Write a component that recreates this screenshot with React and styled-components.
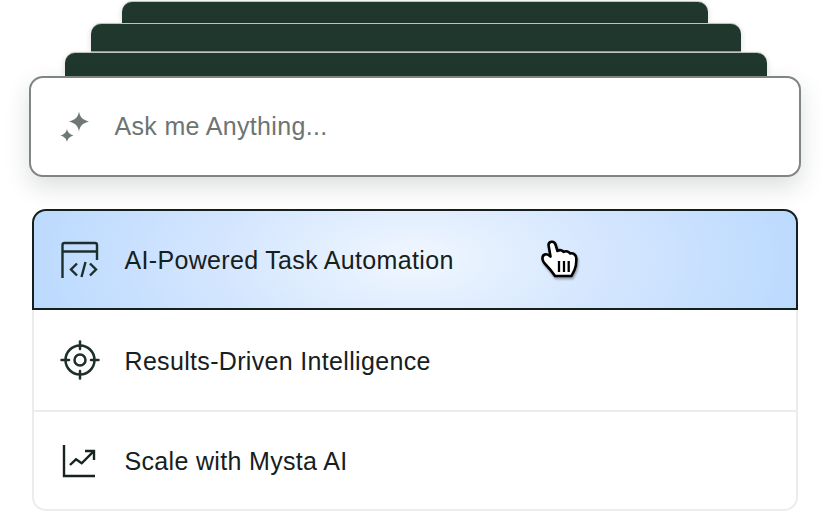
import styled, { createGlobalStyle } from "styled-components";

const GlobalStyle = createGlobalStyle`
  html, body {
    margin: 0;
    padding: 0;
    background: #ffffff;
  }

  body {
    width: 828px;
    height: 511px;
    overflow: hidden;
    font-family: "Liberation Sans", Arial, sans-serif;
  }
`;

const TABS = [
  { width: 586, height: 21, gap: 1, shift: 0 },
  { width: 650, height: 27, gap: 2, shift: 2 },
  { width: 702, height: 23, gap: 0, shift: 2 },
];

const ITEMS = [
  { label: "AI-Powered Task Automation", icon: "code", active: true },
  { label: "Results-Driven Intelligence", icon: "target" },
  { label: "Scale with Mysta AI", icon: "chart" },
];

function SparkIcon() {
  return (
    <svg width="32" height="32" viewBox="0 0 32 32" fill="#6d7877">
      <path d="M19 0.5 C20 6 22 8.5 29 10.5 C22 12.5 20 15 19 20.5 C18 15 16 12.5 9 10.5 C16 8.5 18 6 19 0.5 Z" />
      <path d="M7 18 C7.8 21.5 9.5 23.2 13.5 24.5 C9.5 25.8 7.8 27.5 7 31 C6.2 27.5 4.5 25.8 0.5 24.5 C4.5 23.2 6.2 21.5 7 18 Z" />
    </svg>
  );
}

function CodeIcon() {
  return (
    <svg width="38" height="38" viewBox="0 0 38 38" fill="none" stroke="#1c2f2a" strokeWidth="2.4">
      <path d="M1.5 37 V4 C1.5 2.8 2.3 2 3.5 2 H34 C35.2 2 36 2.8 36 4 V19" />
      <path d="M1.5 10.5 H36" />
      <path d="M16 22.5 L10 28.5 L16 34.5" />
      <path d="M29 22.5 L35 28.5 L29 34.5" />
      <path d="M24.5 21 L20.5 36" />
    </svg>
  );
}

function TargetIcon() {
  return (
    <svg width="40" height="40" viewBox="0 0 40 40" fill="none" stroke="#1c2f2a" strokeWidth="2.5" strokeLinecap="round">
      <circle cx="20" cy="20" r="14.5" />
      <circle cx="20" cy="20" r="5.5" />
      <path d="M20 1.5 V9" />
      <path d="M20 31 V38.5" />
      <path d="M1.5 20 H9" />
      <path d="M31 20 H38.5" />
    </svg>
  );
}

function ChartIcon() {
  return (
    <svg width="36" height="34" viewBox="0 0 36 34" fill="none" stroke="#16231f" strokeWidth="2.4">
      <path d="M2 1 V32 H33" />
      <path d="M8 21 L14 15.3 L19.7 19.3 L31.3 7.7" />
      <path d="M23 7 H32 V16" />
    </svg>
  );
}

function HandCursor() {
  return (
    <svg width="37" height="38" viewBox="0 0 37 38">
      <path
        d="M7.5 5 C7.5 1.5 13 0 14.5 4.5 L16.5 11 C18.5 9.5 21.5 10 22.5 12 C25 10.5 28 11.5 29 13.5 C32 12.5 35 14.5 35.3 18 C35.5 23 35 27 33.5 30 L30.5 36 L14 36 C12 33 9 29 5.5 25.5 C3.5 23.5 1 21 1.5 17.5 C2 14 6 13 9.5 16.5 Z"
        fill="#ffffff"
        stroke="#000000"
        strokeWidth="2.6"
        strokeLinejoin="round"
      />
      <path d="M18 21 V32 M23 21 V32 M27.7 21 V32" stroke="#000000" strokeWidth="2.3" />
    </svg>
  );
}

const ICONS = {
  code: <CodeIcon />,
  target: <TargetIcon />,
  chart: <ChartIcon />,
};

function App() {
  return (
    <>
      <GlobalStyle />
      <Page>
        <TabStack>
          {TABS.map((tab) => (
            <Tab
              key={tab.width}
              $width={tab.width}
              $height={tab.height}
              $gap={tab.gap}
              $shift={tab.shift}
            />
          ))}
        </TabStack>
        <SearchBox>
          <SparkIcon />
          <Placeholder>Ask me Anything...</Placeholder>
        </SearchBox>
        <FeatureList>
          {ITEMS.map((item) => (
            <FeatureRow key={item.label} $active={item.active}>
              <IconSlot>{ICONS[item.icon]}</IconSlot>
              <FeatureLabel>{item.label}</FeatureLabel>
              {item.active && (
                <Cursor>
                  <HandCursor />
                </Cursor>
              )}
            </FeatureRow>
          ))}
        </FeatureList>
      </Page>
    </>
  );
}

const Page = styled.div`
  display: flex;
  flex-direction: column;
  align-items: center;
  width: 829px;
  padding-top: 2px;
`;

const TabStack = styled.div`
  display: flex;
  flex-direction: column;
  align-items: center;
  width: 100%;
`;

const Tab = styled.div`
  box-sizing: border-box;
  width: ${(props) => props.$width}px;
  height: ${(props) => props.$height}px;
  margin-bottom: ${(props) => props.$gap}px;
  margin-left: ${(props) => props.$shift}px;
  background: #1f372d;
  border-radius: 10px 10px 0 0;
  box-shadow: 0 -1px 0 #bfc4c2, 0 1px 0 #9aa19e, 2px 0 4px rgba(0, 0, 0, 0.08), -2px 0 4px rgba(0, 0, 0, 0.08);
`;

const SearchBox = styled.div`
  box-sizing: border-box;
  position: relative;
  display: flex;
  align-items: center;
  gap: 23px;
  width: 772px;
  height: 101px;
  margin-bottom: 32px;
  padding: 0 0 0 29px;
  background: #ffffff;
  border: 2px solid #7f8583;
  border-radius: 14px;
  box-shadow: 0 10px 24px rgba(40, 50, 48, 0.16);
`;

const Placeholder = styled.span`
  color: #6d7472;
  font-size: 25px;
  letter-spacing: 0.33px;
`;

const FeatureList = styled.div`
  box-sizing: border-box;
  width: 766px;
  height: 302px;
  display: flex;
  flex-direction: column;
  background: #ffffff;
  border: 2px solid #ececec;
  border-top: 0;
  border-radius: 14px;
`;

const FeatureRow = styled.div`
  box-sizing: border-box;
  position: relative;
  display: flex;
  align-items: center;
  flex: 0 0 100px;
  gap: 25px;
  padding-left: 26px;
  ${(props) =>
    props.$active
      ? `
    flex-basis: 101px;
    margin: 0 -2px;
    background: radial-gradient(ellipse 400px 190px at 50% 50%, #f0f7ff 0%, #d6e7fe 45%, #bad9fe 100%);
    border: 2px solid #15201d;
    border-radius: 14px 14px 0 0;
  `
      : `
    &:last-child { flex: 1; border-top: 2px solid #ececec; }
  `}
`;

const IconSlot = styled.div`
  display: flex;
  align-items: center;
  justify-content: center;
  width: 40px;
`;

const FeatureLabel = styled.span`
  padding-top: 2px;
  color: #16201d;
  font-size: 25px;
  letter-spacing: 0.33px;
`;

const Cursor = styled.div`
  position: absolute;
  left: 507px;
  top: 29px;
  display: flex;
  filter: drop-shadow(1px 2px 1px rgba(0, 0, 0, 0.35));
`;

export default App;
